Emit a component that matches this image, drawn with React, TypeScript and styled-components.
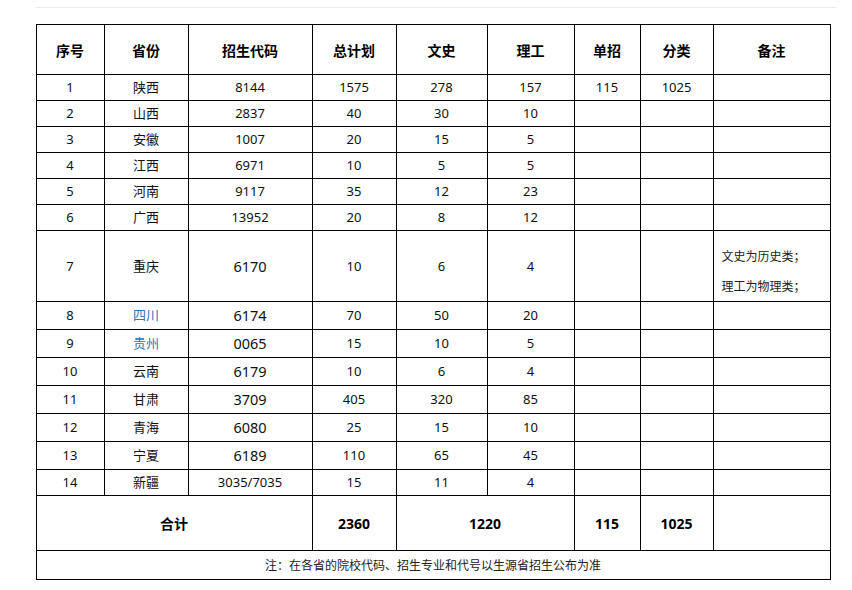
import React from 'react';
import styled, { createGlobalStyle } from 'styled-components';

const GlobalStyle = createGlobalStyle`
  html, body {
    margin: 0;
    padding: 0;
    background: #fff;
  }
  body {
    font-family: "Noto Sans", "Noto Sans CJK SC", sans-serif;
    color: #111;
  }
`;

interface Row {
  no: number;
  province: string;
  provinceColor?: string;
  code: string;
  total: string;
  arts: string;
  science: string;
  single?: string;
  sort?: string;
  height: number;
  bigCode?: boolean;
  note?: string[];
}

const COLS = [68, 84, 124, 84, 91, 87, 66, 73, 117];

const HEADERS = ['序号', '省份', '招生代码', '总计划', '文史', '理工', '单招', '分类', '备注'];

const ROWS: Row[] = [
  { no: 1, province: '陕西', code: '8144', total: '1575', arts: '278', science: '157', single: '115', sort: '1025', height: 26 },
  { no: 2, province: '山西', code: '2837', total: '40', arts: '30', science: '10', height: 26 },
  { no: 3, province: '安徽', code: '1007', total: '20', arts: '15', science: '5', height: 26 },
  { no: 4, province: '江西', code: '6971', total: '10', arts: '5', science: '5', height: 26 },
  { no: 5, province: '河南', code: '9117', total: '35', arts: '12', science: '23', height: 26 },
  { no: 6, province: '广西', code: '13952', total: '20', arts: '8', science: '12', height: 26 },
  {
    no: 7, province: '重庆', code: '6170', total: '10', arts: '6', science: '4', height: 71, bigCode: true,
    note: ['文史为历史类；', '理工为物理类；'],
  },
  { no: 8, province: '四川', provinceColor: '#2f74b5', code: '6174', total: '70', arts: '50', science: '20', height: 28, bigCode: true },
  { no: 9, province: '贵州', provinceColor: '#2f74b5', code: '0065', total: '15', arts: '10', science: '5', height: 28, bigCode: true },
  { no: 10, province: '云南', code: '6179', total: '10', arts: '6', science: '4', height: 28, bigCode: true },
  { no: 11, province: '甘肃', code: '3709', total: '405', arts: '320', science: '85', height: 28, bigCode: true },
  { no: 12, province: '青海', code: '6080', total: '25', arts: '15', science: '10', height: 28, bigCode: true },
  { no: 13, province: '宁夏', code: '6189', total: '110', arts: '65', science: '45', height: 28, bigCode: true },
  { no: 14, province: '新疆', code: '3035/7035', total: '15', arts: '11', science: '4', height: 26 },
];

export default function App() {
  return (
    <Page>
      <GlobalStyle />
      <TopRule />
      <Table>
        <colgroup>
          {COLS.map((w, i) => (
            <col key={i} style={{ width: w }} />
          ))}
        </colgroup>
        <thead>
          <tr>
            {HEADERS.map((h) => (
              <HeadCell key={h}>{h}</HeadCell>
            ))}
          </tr>
        </thead>
        <tbody>
          {ROWS.map((r) => (
            <tr key={r.no}>
              <Cell $h={r.height}>{r.no}</Cell>
              <Cell $h={r.height} $color={r.provinceColor}>{r.province}</Cell>
              <Cell $h={r.height} $size={r.bigCode ? 14.5 : 13}>{r.code}</Cell>
              <Cell $h={r.height}>{r.total}</Cell>
              <Cell $h={r.height}>{r.arts}</Cell>
              <Cell $h={r.height}>{r.science}</Cell>
              <Cell $h={r.height}>{r.single}</Cell>
              <Cell $h={r.height}>{r.sort}</Cell>
              <NoteCell $h={r.height}>
                {r.note && (
                  <NoteText>
                    {r.note.map((n) => (
                      <div key={n}>{n}</div>
                    ))}
                  </NoteText>
                )}
              </NoteCell>
            </tr>
          ))}
          <tr>
            <TotalCell colSpan={3}>合计</TotalCell>
            <TotalCell>2360</TotalCell>
            <TotalCell colSpan={2}>1220</TotalCell>
            <TotalCell>115</TotalCell>
            <TotalCell>1025</TotalCell>
            <TotalCell />
          </tr>
          <tr>
            <FootCell colSpan={9}>注：在各省的院校代码、招生专业和代号以生源省招生公布为准</FootCell>
          </tr>
        </tbody>
      </Table>
    </Page>
  );
}

const Page = styled.div`
  padding: 7px 0 0 36px;
`;

const TopRule = styled.div`
  width: 800px;
  height: 1px;
  background: #ececec;
  margin-bottom: 16px;
`;

const Table = styled.table`
  border-collapse: collapse;
  table-layout: fixed;
  width: 795px;
  margin-left: -0.5px;

  td, th {
    border: 1px solid #000;
    padding: 0;
    box-sizing: border-box;
    text-align: center;
    vertical-align: middle;
  }
`;

const HeadCell = styled.th`
  height: 50px;
  font-size: 14px;
  font-weight: 700;
  color: #000;
`;

const Cell = styled.td<{ $h: number; $size?: number; $color?: string }>`
  height: ${(p) => p.$h}px;
  font-size: ${(p) => p.$size ?? 13}px;
  color: ${(p) => p.$color ?? '#111'};
  line-height: 1;
`;

const NoteCell = styled.td<{ $h: number }>`
  height: ${(p) => p.$h}px;
  && {
    text-align: left;
  }
`;

const NoteText = styled.div`
  padding: 9px 0 0 8px;
  font-size: 12px;
  line-height: 30px;
  color: #222;
  font-family: "Noto Sans CJK SC", sans-serif;
`;

const TotalCell = styled.td`
  height: 55px;
  font-size: 14px;
  font-weight: 700;
  color: #000;
`;

const FootCell = styled.td`
  height: 29px;
  font-size: 12px;
  color: #222;
`;
